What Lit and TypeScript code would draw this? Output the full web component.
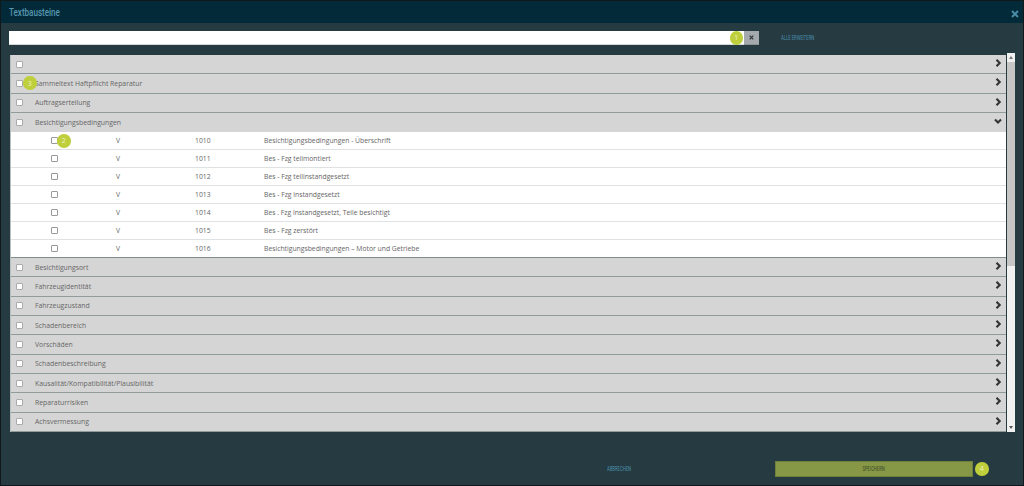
import { LitElement, html, css } from "lit";
import { customElement } from "lit/decorators.js";

const before = ["", "Sammeltext Haftpflicht Reparatur", "Auftragserteilung"];
const after = ["Besichtigungsort", "Fahrzeugidentität", "Fahrzeugzustand", "Schadenbereich", "Vorschäden", "Schadenbeschreibung", "Kausalität/Kompatibilität/Plausibilität", "Reparaturrisiken", "Achsvermessung"];
const items: [string, string][] = [
  ["1010", "Besichtigungsbedingungen - Überschrift"],
  ["1011", "Bes - Fzg teilmontiert"],
  ["1012", "Bes - Fzg teilinstandgesetzt"],
  ["1013", "Bes - Fzg instandgesetzt"],
  ["1014", "Bes . Fzg instandgesetzt, Teile besichtigt"],
  ["1015", "Bes - Fzg zerstört"],
  ["1016", "Besichtigungsbedingungen – Motor und Getriebe"],
];

@customElement("app-root")
export class AppRoot extends LitElement {
  static styles = css`
    :host { display: block; width: 1024px; height: 486px; overflow: hidden; background: #10181b; font-family: "Open Sans", sans-serif; }
    .modal { margin: 1px 0 0 1px; width: 1022px; height: 484px; background: #263a41; display: flex; flex-direction: column; }
    .head { height: 22px; flex: none; background: #032a38; display: flex; align-items: center; justify-content: space-between; padding: 0 4px 0 8px; }
    .title { font: 500 11.5px "Roboto", sans-serif; color: #5596b0; display: inline-block; transform: scaleX(.7); transform-origin: left center; }
    .close { color: #4a8ba5; width: 8px; height: 8px; margin-top: 4px; }
    .search { height: 14px; margin: 8px 0 0 8px; display: flex; flex: none; }
    .input { width: 735px; background: #fff; border-bottom: 1px solid #d5d9da; box-sizing: border-box; position: relative; }
    .clear { width: 15px; background: #a3a9ac; display: flex; align-items: center; justify-content: center; border-bottom: 1px solid #8d9497; box-sizing: border-box; }
    .small { font: 7px "Roboto", sans-serif; display: inline-block; transform: scaleX(.6); }
    .expand { margin-left: 22px; color: #4a90ad; align-self: center; transform-origin: left center; }
    .list-wrap { display: flex; margin: 8px 0 0 9px; height: 379px; flex: none; }
    .list { width: 996px; height: 377px; margin-top: 2px; background: #fff; border-left: 1px solid #b9c0bf; box-sizing: border-box; }
    .group { height: 19.25px; box-sizing: border-box; display: flex; align-items: center; background: #d5d5d5; border-bottom: 1px solid #8f9c9b; font-size: 6.85px; color: #666; padding-left: 5px; }
    .list > .tail { height: 19.33px; }
    .group.open { border-bottom: 0; }
    .group .label { margin-left: 12px; flex: 1; }
    .cb { display: block; width: 5px; height: 5px; background: #fff; border: 1px solid #aaa; border-radius: 1px; }
    .chev { width: 8px; height: 8px; flex: none; margin: 0 4px 2px 0; color: #333; }
    .item { height: 18px; box-sizing: border-box; display: flex; align-items: center; background: #fff; border-bottom: 1px solid #dfe2e2; font-size: 6.8px; color: #666; }
    .item.last { border-bottom-color: #7f8d8c; }
    .item .cell { margin-left: 40px; }
    .item .cb { border-color: #999; }
    .v { margin-left: 58px; width: 79px; }
    .num { width: 69px; }
    .bar { width: 8px; margin-left: 1px; background: #c6c6c6; display: flex; flex-direction: column; position: relative; }
    .arrow { height: 9px; flex: none; background: #f1f1f1; display: flex; align-items: center; justify-content: center; color: #555; }
    .rest { flex: 1; background: #f1f1f1; margin-top: 204px; }
    .foot { flex: 1; display: flex; align-items: flex-start; padding-top: 29px; box-sizing: border-box; }
    .cancel-wrap { margin-left: 606px; width: 168px; height: 15px; display: flex; align-items: center; }
    .cancel { color: #4a90ad; transform-origin: left center; }
    .save { width: 198px; height: 16px; background: #869845; display: flex; align-items: center; justify-content: center; color: #3c4a2c; border: 1px solid #6f8038; box-sizing: border-box; }
    .badge { position: absolute; width: 13.5px; height: 13.5px; border-radius: 50%; background: #bfcf3c; color: #eef2c8; font-size: 7px; display: flex; align-items: center; justify-content: center; }
    .cell { position: relative; flex: none; }
    .b1 { right: 1px; top: 0; }
    .b2 { left: 6px; top: -3px; }
    .b3 { left: 7px; top: -3.5px; }
    .b4 { left: 2px; top: 1px; }
  `;

  chev(open = false) {
    return html`<svg class="chev" viewBox="0 0 8 8"><path d=${open ? "M1 2.5 L4 5.5 L7 2.5" : "M2.5 .8 L5.7 4 L2.5 7.2"} fill="none" stroke="currentColor" stroke-width="2.1"/></svg>`;
  }
  group(label: string, badge = false, open = false, tail = false) {
    return html`<div class="group ${open ? "open" : ""} ${tail ? "tail" : ""}"><span class="cell"><span class="cb"></span>${badge ? html`<span class="badge b3">3</span>` : ""}</span><span class="label">${label}</span>${this.chev(open)}</div>`;
  }
  render() {
    return html`<div class="modal">
      <div class="head"><span class="title">Textbausteine</span><svg class="close" viewBox="0 0 8 8"><path d="M1 1 L7 7 M7 1 L1 7" stroke="currentColor" stroke-width="2"/></svg></div>
      <div class="search">
        <div class="input"><span class="badge b1">1</span></div>
        <div class="clear"><svg width="5" height="5" viewBox="0 0 5 5"><path d="M.7.7 4.3 4.3M4.3.7.7 4.3" stroke="#333" stroke-width="1.2"/></svg></div>
        <span class="small expand">ALLE ERWEITERN</span>
      </div>
      <div class="list-wrap">
        <div class="list">
          ${before.map((g, i) => this.group(g, i === 1))}
          ${this.group("Besichtigungsbedingungen", false, true)}
          ${items.map(([n, t], i) => html`<div class="item ${i === items.length - 1 ? "last" : ""}"><span class="cell"><span class="cb"></span>${i === 0 ? html`<span class="badge b2">2</span>` : ""}</span><span class="v">V</span><span class="num">${n}</span><span>${t}</span></div>`)}
          ${after.map((g) => this.group(g, false, false, true))}
        </div>
        <div class="bar">
          <div class="arrow"><svg width="4" height="3" viewBox="0 0 4 3"><path d="M2 0 4 3H0z" fill="#777"/></svg></div>
          <div class="rest"></div>
          <div class="arrow"><svg width="4" height="3" viewBox="0 0 4 3"><path d="M2 3 4 0H0z" fill="#555"/></svg></div>
        </div>
      </div>
      <div class="foot">
        <span class="cancel-wrap"><span class="small cancel">ABBRECHEN</span></span>
        <span class="save"><span class="small">SPEICHERN</span></span>
        <span class="cell"><span class="badge b4">4</span></span>
      </div>
    </div>`;
  }
}
